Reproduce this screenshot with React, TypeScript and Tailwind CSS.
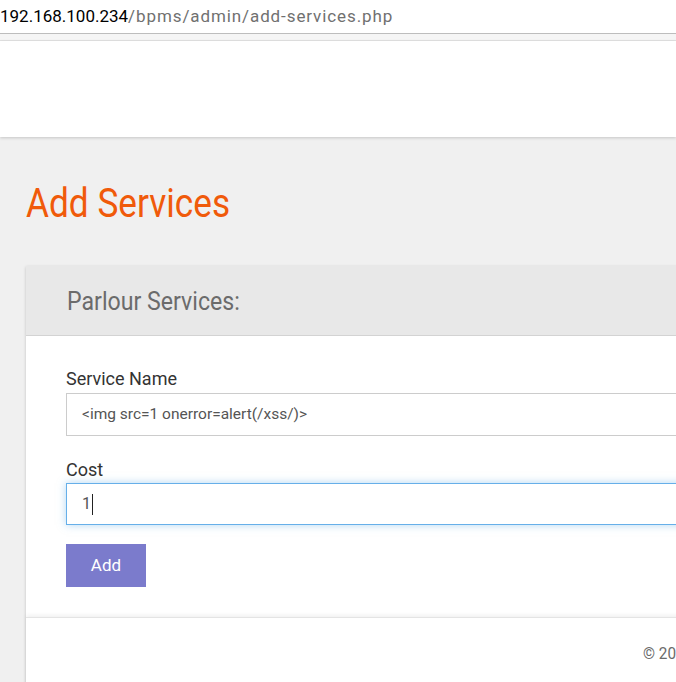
export default function App() {
  return (
    <div className="w-[676px] h-[682px] overflow-hidden bg-[#f0f0f0] font-['Roboto',sans-serif]">
      {/* address bar */}
      <div className="h-[34px] bg-white border-b border-[#bdbdbd] pt-[6px] whitespace-nowrap text-[17px] leading-[20px]">
        <span className="text-black">192.168.100.234</span>
        <span className="text-[#707070] tracking-[0.9px]">/bpms/admin/add-services.php</span>
      </div>
      <div className="h-[7px] bg-[#f5f5f5] border-b border-[#e3e3e3]" />
      <div className="h-[96px] bg-white shadow-[0_1px_3px_rgba(0,0,0,0.18)]" />

      <div className="pl-[26px] pt-[47px]">
        <h1 className="text-[40px] leading-none text-[#f05a0a] whitespace-nowrap">
          <span className="inline-block origin-left scale-x-[0.88]">Add Services</span>
        </h1>

        <div className="mt-[42px] w-[800px] bg-white shadow-[0_1px_3px_rgba(0,0,0,0.2)]">
          <div className="h-[70px] bg-[#e8e8e8] border-b border-[#d3d3d3] flex items-center pl-[41px]">
            <span className="inline-block origin-left scale-x-[0.89] text-[26px] leading-none text-[#6b6b6b] whitespace-nowrap">
              Parlour Services:
            </span>
          </div>

          <div className="pl-[40px] pt-[34px] pb-[30px]">
            <div className="text-[18px] leading-none text-[#333] mb-[5px]">Service Name</div>
            <div className="h-[43px] border border-[#cccccc] flex items-center pl-[15px] text-[15.5px] text-[#555] whitespace-nowrap">
              &lt;img src=1 onerror=alert(/xss/)&gt;
            </div>

            <div className="text-[18px] leading-none text-[#333] mt-[25px] mb-[4px]">Cost</div>
            <div className="h-[42px] border border-[#66afe9] shadow-[0_0_8px_rgba(102,175,233,0.5)] flex items-center pl-[15px] text-[16px] text-[#555]">
              <span>1</span>
              <span className="ml-[1px] w-[1px] h-[21px] bg-[#222]" />
            </div>

            <button className="mt-[19px] w-[80px] h-[43px] bg-[#7b7bcc] text-white text-[17px]">
              Add
            </button>
          </div>

          <div className="border-t border-[#e4e4e4] shadow-[0_-2px_4px_rgba(0,0,0,0.06)] h-[80px] pl-[617px] pt-[24px]">
            <span className="inline-block origin-left scale-x-[0.9] text-[17px] leading-none text-[#6b6b6b] whitespace-nowrap">
              © 2020 Beauty Parlour Management System
            </span>
          </div>
        </div>
      </div>
    </div>
  );
}
